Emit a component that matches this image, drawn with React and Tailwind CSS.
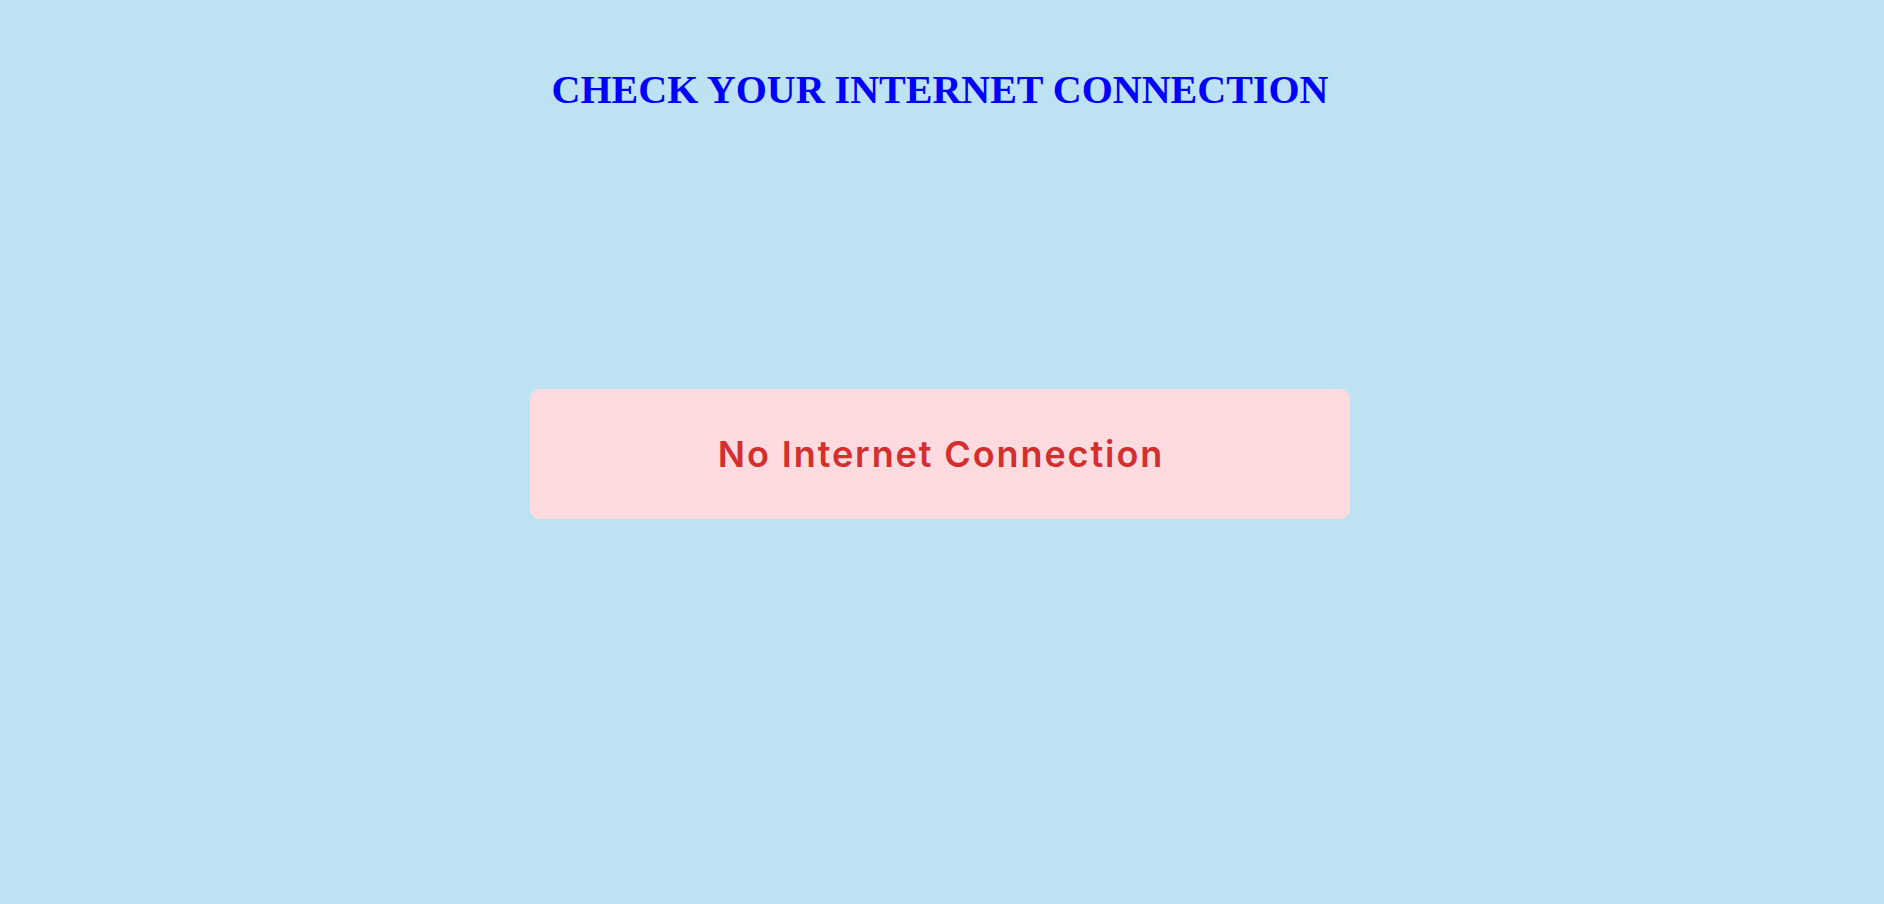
export default function App() {
    return (
        <div className="min-h-screen bg-[#bde2f1] pr-1 pt-[67px]">
            <h1 className="text-center font-['Liberation_Serif',serif] text-[40px] font-bold leading-[46px] text-[#0000ff]">
                CHECK YOUR INTERNET CONNECTION
            </h1>

            <div className="mx-auto mt-[276px] flex h-[130px] w-[820px] items-center justify-center rounded-[10px] bg-[#ffdbdf]">
                <p className="pl-[2px] font-['Inter',sans-serif] text-[36px] font-semibold tracking-[1.9px] text-[#d32f2f]">
                    No Internet Connection
                </p>
            </div>
        </div>
    );
}
